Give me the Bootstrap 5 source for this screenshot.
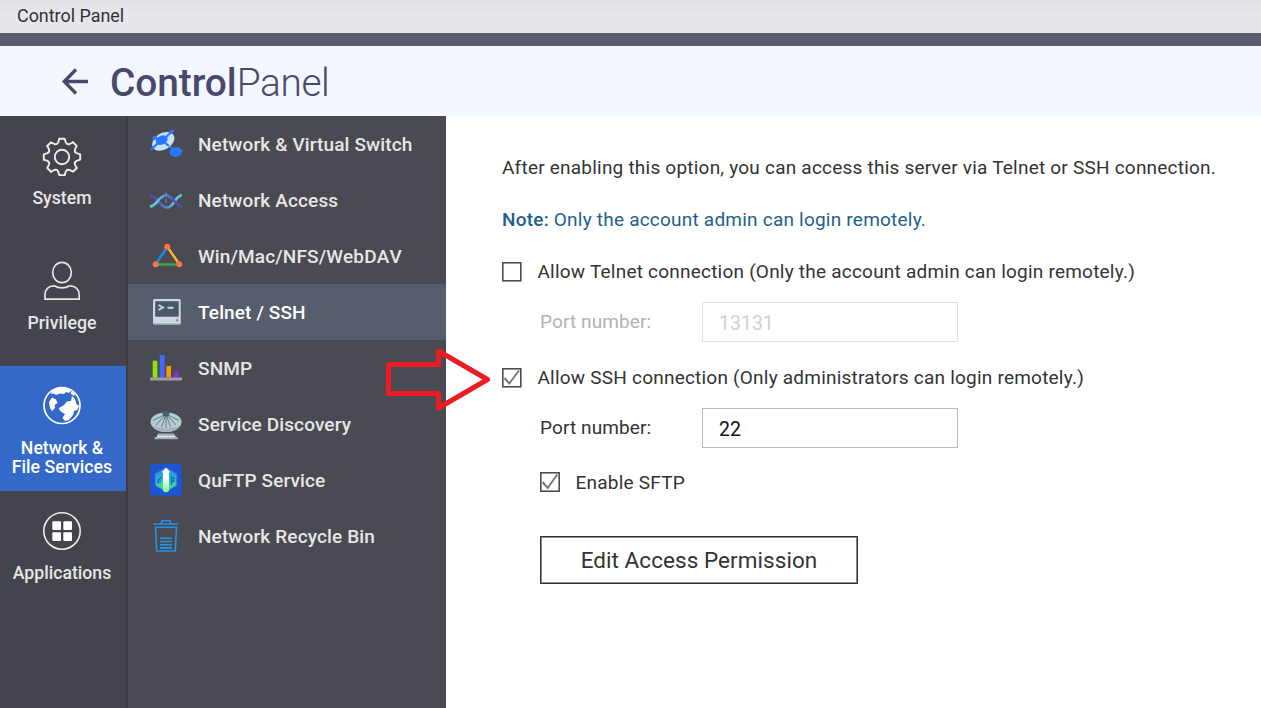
<!DOCTYPE html>
<html lang="en">
<head>
<meta charset="utf-8">
<meta name="viewport" content="width=device-width, initial-scale=1">
<title>Control Panel</title>
<link href="https://cdn.jsdelivr.net/npm/bootstrap@5.3.0/dist/css/bootstrap.min.css" rel="stylesheet">
<script src="https://cdn.jsdelivr.net/npm/bootstrap@5.3.0/dist/js/bootstrap.bundle.min.js" defer></script>
<style>
body{font-family:Roboto,"Liberation Sans",sans-serif;height:708px;overflow:hidden;color:#333;background:#fff}
.window-title{height:33px;background:linear-gradient(#e1e0e4,#e7e6ea 40%);color:#333336;font-size:17.9px;line-height:32px;padding-left:17px}
.window-strip{height:13px;background:#5a5c70}
.app-head{height:70px;background:#f3f7ff;color:#48496b;padding-left:61px}
.app-head h1{font-size:38.8px;line-height:70px;margin:3px 0 0 21px;font-weight:300;letter-spacing:-.35px}
.app-head h1 b{font-weight:500;letter-spacing:-.05px}
.app-body{height:592px}
.rail{width:126px;background:#44444c}
.rail-item{height:125px;padding:20px 2px 0 0;color:#e6e6e6;font-size:17.7px;line-height:19px;font-weight:500;text-decoration:none}
.rail-item svg{width:40px;height:40px;margin-bottom:13px}
.rail-item.current{background:#3469c9;color:#fff}
.submenu{width:320px;background:#4a4a53;border-left:2px solid #3b3b40}
.submenu a{height:56px;padding-left:21px;color:#e6e6e6;text-decoration:none;font-size:19px;letter-spacing:.13px;font-weight:500;line-height:28px}
.submenu a svg{width:34px;height:34px;margin-right:15px}
.submenu a span{padding-top:2px}
.submenu a.current{background:#565d6c;color:#fff}
.submenu .unkerned{font-kerning:none}
.settings{padding:38px 0 0 56px;font-size:19px;line-height:28px;letter-spacing:.22px}
.blue-note{color:#1f5f8b}
.blue-note b{font-weight:500}
.tick{width:20px;height:20px;margin-right:15.5px}
.indented{padding-left:38px}
.port-name{width:162px;letter-spacing:.1px}
.port-input{width:256px;height:40px;border:1px solid #bababa;border-radius:0;padding:3px 16px 0;font:inherit;font-size:19.5px;letter-spacing:0;color:#111}
.off{color:#b2b2b2}
.off .port-input{border-color:#e2e2e2;color:#d0d0d0;background:#fff}
.edit-btn{width:318px;height:48px;border:1px solid #333;box-shadow:inset 0 0 0 1px #8a8a8a;border-radius:0;font-size:22.5px;letter-spacing:.06px;line-height:46px;padding:0 0 1px;color:#333;background:#fff}
.pointer{left:384px;top:345px}
</style>
</head>
<body class="position-relative">
<header>
  <div class="window-title">Control Panel</div>
  <div class="window-strip"></div>
  <div class="app-head d-flex align-items-center">
    <svg width="28" height="28" viewBox="0 0 28 28" fill="none" stroke="#48496b" stroke-width="3.3"><path d="M27 14.500H4M15 2.500L3.200 14.500L15 26.500"/></svg>
    <h1><b>Control</b>Panel</h1>
  </div>
</header>
<div class="app-body d-flex">
  <nav class="rail flex-shrink-0 d-flex flex-column">
    <a class="rail-item d-flex flex-column align-items-center text-center">
      <svg viewBox="-20 -21 40 40" fill="none" stroke="#ececec" stroke-width="1.9" stroke-linejoin="round" stroke-linecap="round">
        <defs><path id="tooth" d="M-2.600 -18.200H2.600L3.800 -14.600Q5 -12 7.640 -13L11.030 -14.700"/></defs>
        <use href="#tooth"/><use href="#tooth" transform="rotate(45)"/><use href="#tooth" transform="rotate(90)"/><use href="#tooth" transform="rotate(135)"/><use href="#tooth" transform="rotate(180)"/><use href="#tooth" transform="rotate(225)"/><use href="#tooth" transform="rotate(270)"/><use href="#tooth" transform="rotate(315)"/>
        <circle r="7.200"/>
      </svg>System</a>
    <a class="rail-item d-flex flex-column align-items-center text-center">
      <svg viewBox="0 0 40 40" fill="none" stroke="#e4e4e4" stroke-width="1.700"><ellipse cx="20" cy="11.500" rx="9.300" ry="10.200"/><path d="M13 25C6 24.500 3 29 3 34V38.200H37.200V34C37.200 29 34 24.500 27 25C24 27.600 16 27.600 13 25Z"/></svg>Privilege</a>
    <a class="rail-item current d-flex flex-column align-items-center text-center">
      <svg viewBox="0 0 40 40"><circle cx="20" cy="19.500" r="18" fill="none" stroke="#fff" stroke-width="1.700"/><path fill="#fff" d="M10 5L15 2.200L24 2L29 4.500L27 7L24 6L22 8L18 7.500L14 9L12 7.500L9 8ZM7 16L10 11.500L14 13.500L15.500 17L12.500 19L13 22L10 25L8 22ZM22 19L25 15.500L29 15L30 10L33 13L34.500 18L37 20L35 24L32 25L31 29L27 34L23 35L20.500 32L23 28L18 25L17 22ZM29 5L33 8L32 10L29 8Z"/></svg>Network &amp;<br>File Services</a>
    <a class="rail-item d-flex flex-column align-items-center text-center">
      <svg viewBox="0 0 40 40"><circle cx="20" cy="20" r="18.200" fill="none" stroke="#ececec" stroke-width="1.600"/><g fill="#fff"><rect x="10.300" y="10.300" width="8.700" height="8.700" rx="1"/><rect x="21.300" y="10.300" width="8.700" height="8.700" rx="1"/><rect x="10.300" y="21.300" width="8.700" height="8.700" rx="1"/><rect x="21.300" y="21.300" width="8.700" height="8.700" rx="1"/></g></svg>Applications</a>
  </nav>
  <nav class="submenu flex-shrink-0 d-flex flex-column">
    <a class="d-flex align-items-center"><svg viewBox="0 0 34 34"><path d="M15 15L24 22" stroke="#2979ff" stroke-width="2"/><ellipse cx="14.300" cy="14.300" rx="12" ry="8.200" fill="#c5e1fb" transform="rotate(-32 14.300 14.300)"/><ellipse cx="12.700" cy="13.300" rx="6.200" ry="4.500" fill="#2979ff" transform="rotate(-25 12.500 13.300)"/><path d="M1.500 23.300L8.500 16.500M17 10L23.500 4M5 10.500L9 12M15 15L20 19" stroke="#2979ff" stroke-width="2.200"/><ellipse cx="5.600" cy="10.800" rx="2.700" ry="2" fill="#2979ff" transform="rotate(-35 5.600 10.800)"/><ellipse cx="22.600" cy="4.700" rx="2.500" ry="1.800" fill="#2979ff" transform="rotate(-35 22.600 4.700)"/><ellipse cx="26.800" cy="25" rx="6.400" ry="4.900" fill="#2979ff" transform="rotate(-12 27 25)"/></svg><span>Network &amp; Virtual Switch</span></a>
    <a class="d-flex align-items-center"><svg viewBox="0 0 34 34" fill="none" stroke-width="2.600"><defs><linearGradient id="w1"><stop offset=".25" stop-color="#5bc8dc"/><stop offset=".55" stop-color="#5379c8"/><stop offset=".85" stop-color="#5a46b4"/></linearGradient><linearGradient id="w2"><stop offset=".15" stop-color="#5a46b4"/><stop offset=".45" stop-color="#5379c8"/><stop offset=".75" stop-color="#5bc8dc"/></linearGradient></defs><path d="M17 9.500V14M17 15.500V20M13.500 13V16M20.500 13V16" stroke="#5379c8" stroke-width="1.600"/><path d="M1 12.500C8 13 11 24.500 18 24.500S26 12.500 33 12.300" stroke="url(#w2)"/><path d="M1 23.500C8 23 10 12.300 17 12.300S26 23 33 23.500" stroke="url(#w1)"/></svg><span>Network Access</span></a>
    <a class="d-flex align-items-center"><svg viewBox="0 0 34 34" stroke-width="2.500"><path d="M18.300 7.700L6.700 25.300" stroke="#1e88e5"/><path d="M18.300 7.700L30.300 25.300" stroke="#fbb62b"/><path d="M6.700 25.500H30.300" stroke="#43a047"/><g fill="#ff7043"><circle cx="18.300" cy="7.700" r="3"/><circle cx="6.700" cy="25.200" r="3"/><circle cx="30.200" cy="25.200" r="3"/></g></svg><span class="unkerned">Win/Mac/NFS/WebDAV</span></a>
    <a class="current d-flex align-items-center"><svg viewBox="0 0 34 34"><rect x="4" y="4" width="27.700" height="25.500" rx="1.500" fill="#cfd8dc"/><path d="M5 28.500H31V29.600H5Z" fill="#90a4ae"/><rect x="6.200" y="6.200" width="23.500" height="15.500" fill="#495869"/><path d="M9.500 10L14 12.500L9.500 15M18.500 12.800H24.500" fill="none" stroke="#cfd8dc" stroke-width="1.900"/><circle cx="28" cy="25.300" r="1.200" fill="#78909c"/></svg><span>Telnet / SSH</span></a>
    <a class="d-flex align-items-center"><svg viewBox="0 0 34 34"><path d="M3.700 9.700h4.700v17H3.700Z" fill="#8ce600"/><path d="M10.700 4h5v22.500h-5Z" fill="#4664ff"/><path d="M17.300 15H22v11.500h-4.700Z" fill="#f59b00"/><path d="M25 20.300h4.700v6H25Z" fill="#8430dc"/><path d="M1 26.500H33V29.500H1Z" fill="#9e9ea3"/></svg><span>SNMP</span></a>
    <a class="d-flex align-items-center"><svg viewBox="0 0 34 34"><path d="M9 26.500H25L26.500 30H28.700V32.300H5.700V30H7.500Z" fill="#a3b1b8"/><path d="M8 29.500H26.500" stroke="#e1e8eb" stroke-width="1.500"/><path d="M17 5.500C24 5.500 32.500 8.500 32.500 15C32.500 20 26 25 17 25S1.500 20 1.500 15C1.500 8.500 10 5.500 17 5.500Z" fill="#b8ccd5"/><path d="M2 17C5 20 9 21 11 20L17 22L23 20C26 21 29 20 32 17C30 22 24 25 17 25S4 22 2 17Z" fill="#a5b5bd"/><path d="M17 7L4 13.500M17 7L7 18M17 7L12.500 20M17 7V21M17 7L21.500 20M17 7L27 18M17 7L30 13.500" stroke="#6d8995" stroke-width="1.100"/><ellipse cx="17" cy="6.700" rx="3.500" ry="2.600" fill="#4b626d"/></svg><span>Service Discovery</span></a>
    <a class="d-flex align-items-center"><svg viewBox="0 0 34 34"><defs><linearGradient id="q" x2="0" y2="1"><stop offset=".15" stop-color="#1e96f0"/><stop offset=".5" stop-color="#28bed2"/><stop offset=".9" stop-color="#50eb78"/></linearGradient><linearGradient id="up" x2="0" y2="1"><stop offset=".4" stop-color="#fff"/><stop offset="1" stop-color="#7cf58c"/></linearGradient></defs><rect x="1" y=".8" width="32" height="32" rx="4" fill="#1c55d0"/><path d="M17 5L27.500 11V22.500L17 28.500L6.500 22.500V11Z" fill="url(#q)" stroke="#4b7ccc" stroke-width="1.200"/><path d="M12.500 14.500L9 17V21M9 18.500H12M22.500 22V14L25 15V18L22.500 19" fill="none" stroke="#1c6ad0" stroke-width="1.500"/><path d="M17 4.500L21.500 9.500H20V28L17 29.500L14 28V9.500H12.500Z" fill="url(#up)"/></svg><span>QuFTP Service</span></a>
    <a class="d-flex align-items-center"><svg viewBox="0 0 34 34" fill="none" stroke="#2594e8" stroke-width="1.600"><path d="M4.300 5H29.700M11.700 5L13 1.800H21L22.300 5M6.500 8.200H27.500L26.300 32H7.700ZM11 19.300H23M11 22.500H23M11 25.700H23M11 28.900H23"/></svg><span>Network Recycle Bin</span></a>
  </nav>
  <main class="settings flex-grow-1">
    <p class="mb-4">After enabling this option, you can access this server via Telnet or SSH connection.</p>
    <p class="blue-note mb-4"><b>Note:</b> Only the account admin can login remotely.</p>
    <div class="d-flex align-items-center"><svg class="tick" viewBox="0 0 20 20"><rect x=".8" y=".8" width="18" height="18" fill="#fff" stroke="#444" stroke-width="1.500"/></svg>Allow Telnet connection (Only the account admin can login remotely.)</div>
    <div class="off indented d-flex align-items-center mt-3"><label class="port-name" for="p1">Port number:</label><input id="p1" class="port-input form-control" value="13131" disabled></div>
    <div class="d-flex align-items-center" style="margin-top:22px"><svg class="tick" viewBox="0 0 20 20"><rect x=".8" y=".8" width="18" height="18" fill="#fff" stroke="#444" stroke-width="1.500"/><path d="M2.500 10L7.300 15.500L17 2.500" fill="none" stroke="#777" stroke-width="2"/></svg>Allow SSH connection (Only administrators can login remotely.)</div>
    <div class="indented d-flex align-items-center mt-3"><label class="port-name" for="p2">Port number:</label><input id="p2" class="port-input form-control" value="22"></div>
    <div class="indented d-flex align-items-center" style="margin-top:20px"><svg class="tick" viewBox="0 0 20 20"><rect x=".8" y=".8" width="18.400" height="18.400" fill="#fff" stroke="#444" stroke-width="1.500"/><path d="M2.500 10L7.700 16L17.300 2.500" fill="none" stroke="#777" stroke-width="2"/></svg><span style="padding-top:1px;margin-bottom:-1px">Enable SFTP</span></div>
    <div class="indented" style="margin-top:40px"><button class="btn edit-btn">Edit Access Permission</button></div>
  </main>
</div>
<svg class="pointer position-absolute" width="108" height="68" viewBox="384 345 108 68" fill="none" stroke="#ed1c24" stroke-width="5" stroke-linejoin="round"><path d="M388.500 364.500H438.500V351L487.500 379.500L438.500 408V393.500H388.500Z"/></svg>
</body>
</html>
